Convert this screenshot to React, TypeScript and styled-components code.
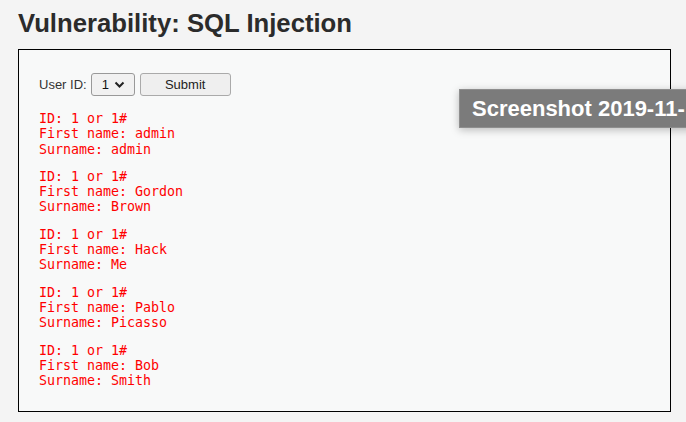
import { createGlobalStyle } from 'styled-components';
import styled from 'styled-components';

const GlobalStyle = createGlobalStyle`
  html, body {
    margin: 0;
    padding: 0;
    background: #f4f4f4;
    width: 686px;
    height: 422px;
    overflow: hidden;
  }
  body {
    font-family: "Liberation Sans", Arial, sans-serif;
    color: #2a2a2a;
  }
`;

const Page = styled.div`
  position: relative;
  padding: 8px 16px 0 18px;
`;

const Title = styled.h1`
  margin: 0 0 11px;
  font-size: 25.7px;
  font-weight: bold;
  color: #2b2b2b;
  line-height: 30px;
`;

const CodeArea = styled.div`
  width: 653px;
  height: 363px;
  box-sizing: border-box;
  border: 1px solid #000;
  background: #f8f9f9;
  padding: 23px 20px 0 20px;
`;

const Form = styled.form`
  display: flex;
  align-items: center;
  gap: 5px;
  font-size: 13px;
  color: #333;
`;

const Label = styled.span`
  margin-right: -1px;
`;

const Select = styled.div`
  display: flex;
  align-items: center;
  gap: 5px;
  box-sizing: border-box;
  width: 44px;
  height: 23px;
  padding: 0 0 0 10px;
  border: 1px solid #999;
  border-radius: 3px;
  background: #f1f1f1;
  font-size: 13px;
  color: #111;
`;

const Button = styled.button`
  box-sizing: border-box;
  width: 91px;
  height: 23px;
  border: 1px solid #aaa;
  border-radius: 3px;
  background: #efefef;
  font-family: "Liberation Sans", Arial, sans-serif;
  font-size: 13px;
  color: #222;
  padding: 0;
`;

const Result = styled.pre`
  margin: 15px 0 0;
  font-family: "DejaVu Sans Mono", monospace;
  font-size: 13.3px;
  line-height: 15.3px;
  color: #ff0000;
  & + & {
    margin-top: 12px;
  }
`;

const Tooltip = styled.div`
  position: absolute;
  left: 459px;
  top: 89px;
  height: 39px;
  width: 260px;
  box-sizing: border-box;
  background: #7b7b7b;
  border: 1px solid #8e8e8e;
  box-shadow: 0 2px 8px rgba(0, 0, 0, 0.25);
  color: #fff;
  font-family: "Liberation Sans", Arial, sans-serif;
  font-weight: bold;
  font-size: 22px;
  line-height: 37px;
  padding-left: 12px;
  white-space: nowrap;
`;

const users = [
  ['admin', 'admin'],
  ['Gordon', 'Brown'],
  ['Hack', 'Me'],
  ['Pablo', 'Picasso'],
  ['Bob', 'Smith'],
];

export default function App() {
  return (
    <>
      <GlobalStyle />
      <Page>
        <Title>Vulnerability: SQL Injection</Title>
        <CodeArea>
          <Form onSubmit={(e) => e.preventDefault()}>
            <Label>User ID:</Label>
            <Select>
              1
              <svg width="11" height="8" viewBox="0 0 11 8">
                <path d="M1.5 1.5 L5.5 5.5 L9.5 1.5" fill="none" stroke="#222" strokeWidth="2" />
              </svg>
            </Select>
            <Button type="button">Submit</Button>
          </Form>
          {users.map(([first, last]) => (
            <Result key={first}>
              {`ID: 1 or 1#\nFirst name: ${first}\nSurname: ${last}`}
            </Result>
          ))}
        </CodeArea>
        <Tooltip>Screenshot 2019-11-</Tooltip>
      </Page>
    </>
  );
}
